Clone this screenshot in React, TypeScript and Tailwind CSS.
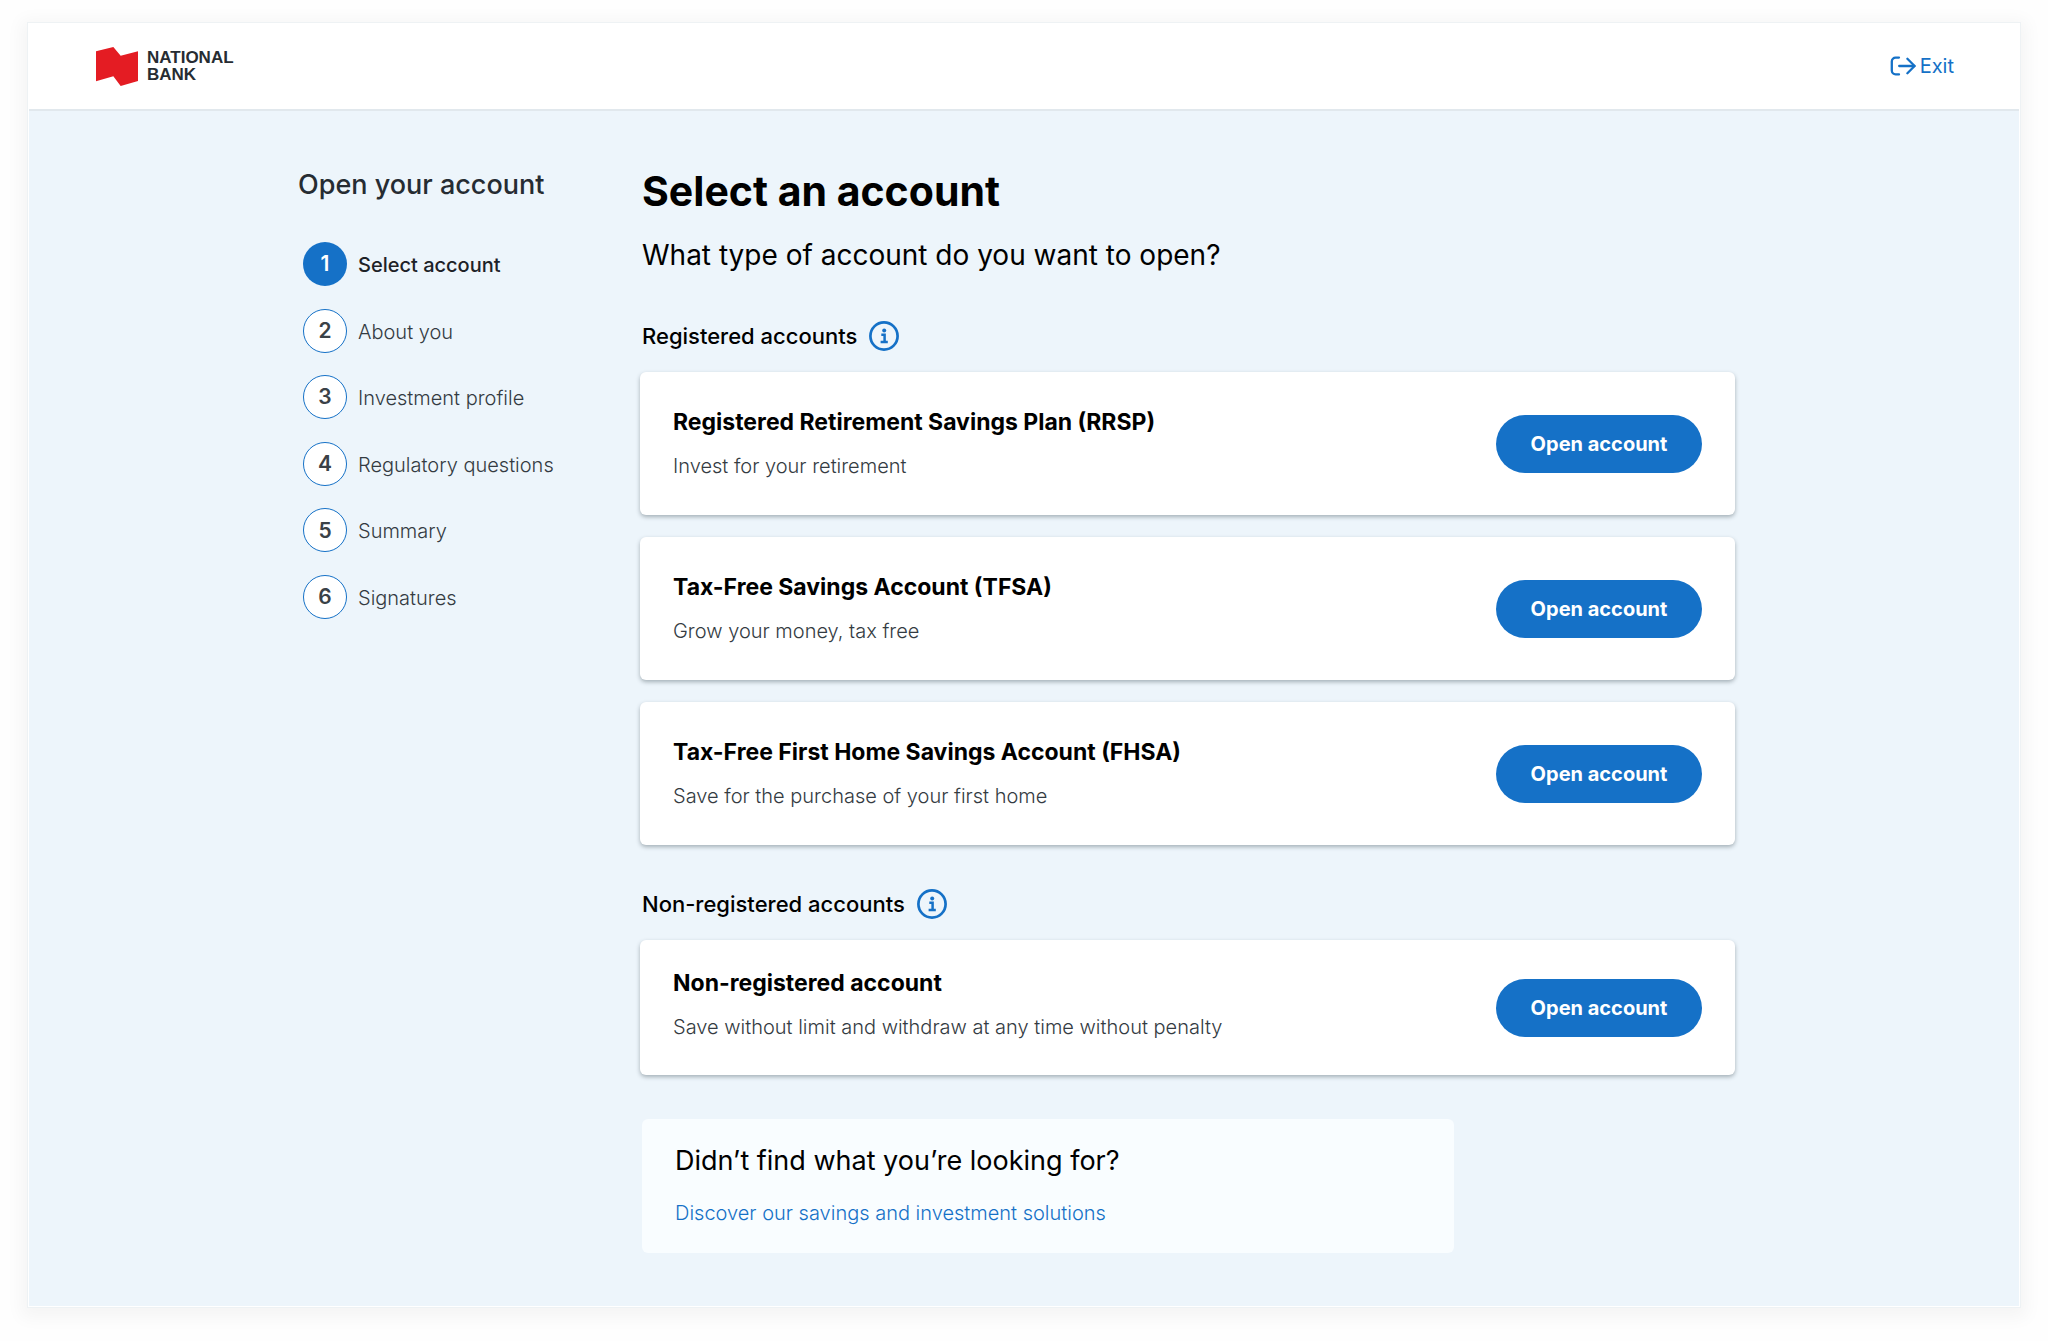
interface Account {
  title: string;
  description: string;
}

const steps = [
  'Select account',
  'About you',
  'Investment profile',
  'Regulatory questions',
  'Summary',
  'Signatures',
];

const registeredAccounts: Account[] = [
  {
    title: 'Registered Retirement Savings Plan (RRSP)',
    description: 'Invest for your retirement',
  },
  {
    title: 'Tax-Free Savings Account (TFSA)',
    description: 'Grow your money, tax free',
  },
  {
    title: 'Tax-Free First Home Savings Account (FHSA)',
    description: 'Save for the purchase of your first home',
  },
];

const Logo = () => (
  <a href="#" className="flex items-center gap-[9px]">
    <svg viewBox="0 0 126 117" className="w-[42px] h-[39px]" aria-hidden="true">
      <path d="M0 13 52 0 74 26 126 13V102L74 117 52 88 0 103Z" fill="#e41c23" />
    </svg>
    <span className="font-['Liberation_Sans',sans-serif] text-[17px] leading-[17px] font-bold text-[#262c32]">
      NATIONAL
      <br />
      BANK
    </span>
  </a>
);

const ExitIcon = () => (
  <svg
    viewBox="0 0 26 20"
    className="w-[26px] h-5"
    fill="none"
    stroke="currentColor"
    strokeWidth="2.3"
    strokeLinecap="round"
    strokeLinejoin="round"
    aria-hidden="true"
  >
    <path d="M9 1.6H5.6A3.8 3.8 0 0 0 1.8 5.4v9.2a3.8 3.8 0 0 0 3.8 3.8H9" />
    <path d="M9.2 10h15.2" />
    <path d="m17.4 2.8 7.2 7.2-7.2 7.2" />
  </svg>
);

const InfoIcon = () => (
  <svg viewBox="0 0 30 30" className="size-[30px]" fill="none" aria-hidden="true">
    <circle cx="15" cy="15" r="13.6" stroke="#1571c7" strokeWidth="2.7" />
    <circle cx="15.2" cy="9.6" r="2" fill="#1571c7" />
    <path d="M12.3 13.7h3.3v7M11.6 21h7.2" stroke="#1571c7" strokeWidth="2.5" />
  </svg>
);

const SectionHeading = ({ title }: { title: string }) => (
  <div className="flex items-center gap-3 pl-0.5">
    <h2 className="text-[22px] leading-[30px] font-medium text-black">{title}</h2>
    <button type="button" aria-label={`More about ${title}`} className="cursor-pointer">
      <InfoIcon />
    </button>
  </div>
);

const AccountCard = ({ account, compact = false }: { account: Account; compact?: boolean }) => (
  <article className="flex items-center justify-between rounded-md bg-white px-[33px] shadow-[0_2px_4px_rgba(30,45,55,0.35)]">
    <div className={compact ? 'pt-[27px] pb-[34px]' : 'pt-[34px] pb-[35px]'}>
      <h3 className="text-[23px] leading-8 font-bold text-black">{account.title}</h3>
      <p className="mt-3.5 text-xl leading-7 font-light text-[#343b42]">{account.description}</p>
    </div>
    <button
      type="button"
      className="h-[58px] w-[206px] shrink-0 cursor-pointer rounded-full bg-[#1571c7] text-xl font-bold text-white"
    >
      Open account
    </button>
  </article>
);

const Stepper = () => (
  <aside className="w-[342px] shrink-0 pt-0.5">
    <h2 className="text-[27px] leading-9 font-medium text-[#262c32]">Open your account</h2>
    <ol className="mt-[39px] flex h-[377px] flex-col justify-between pl-[5px]">
      {steps.map((step, index) => {
        const active = index === 0;
        return (
          <li key={step} className="flex items-center gap-[11px]">
            <span
              className={
                active
                  ? 'flex size-11 items-center justify-center rounded-full bg-[#1571c7] text-[21px] font-semibold text-white'
                  : 'flex size-11 items-center justify-center rounded-full border border-[#1571c7] bg-white text-[21px] font-semibold text-[#3a4147]'
              }
            >
              {index + 1}
            </span>
            <span
              className={
                active
                  ? 'pt-0.5 text-xl leading-7 font-medium text-[#1d2227]'
                  : 'pt-0.5 text-xl leading-7 font-light text-[#343b42]'
              }
            >
              {step}
            </span>
          </li>
        );
      })}
    </ol>
  </aside>
);

const App = () => {
  return (
    <div className="min-h-screen bg-[#fefefe] pt-[22px] pr-[27px] pb-8 pl-[27px] font-['Inter',sans-serif]">
      <div className="border border-[#eef2f4] bg-white px-px pb-px shadow-[0_4px_16px_6px_rgba(0,0,0,0.04)]">
        <header className="flex h-[88px] items-center justify-between border-b-2 border-[#e1e8ed] pr-[65px] pl-[67px]">
          <Logo />
          <a href="#" className="flex items-center gap-1 text-xl text-[#1571c7]">
            <ExitIcon />
            Exit
          </a>
        </header>

        <div className="bg-[#edf5fb] px-8 pt-[54px] pb-[53px]">
          <div className="mx-auto flex max-w-[1452px]">
            <Stepper />

            <main className="flex-1 pr-[15px]">
              <h1 className="pl-0.5 text-[41px] leading-[52px] font-bold text-black">
                Select an account
              </h1>
              <p className="mt-5 pl-0.5 text-[28px] leading-9 text-black">
                What type of account do you want to open?
              </p>

              <section className="mt-12">
                <SectionHeading title="Registered accounts" />
                <div className="mt-[21px] flex flex-col gap-[22px]">
                  {registeredAccounts.map((account) => (
                    <AccountCard key={account.title} account={account} />
                  ))}
                </div>
              </section>

              <section className="mt-11">
                <SectionHeading title="Non-registered accounts" />
                <div className="mt-[21px]">
                  <AccountCard
                    compact
                    account={{
                      title: 'Non-registered account',
                      description: 'Save without limit and withdraw at any time without penalty',
                    }}
                  />
                </div>
              </section>

              <section className="mt-11 ml-0.5 max-w-[812px] rounded-md bg-[#f9fdff] px-[33px] pt-6 pb-[26px]">
                <h2 className="text-[27px] leading-9 text-black">
                  Didn’t find what you’re looking for?
                </h2>
                <a
                  href="#"
                  className="mt-5 block text-xl leading-7 font-light text-[#1571c7]"
                >
                  Discover our savings and investment solutions
                </a>
              </section>
            </main>
          </div>
        </div>
      </div>
    </div>
  );
};

export default App;
